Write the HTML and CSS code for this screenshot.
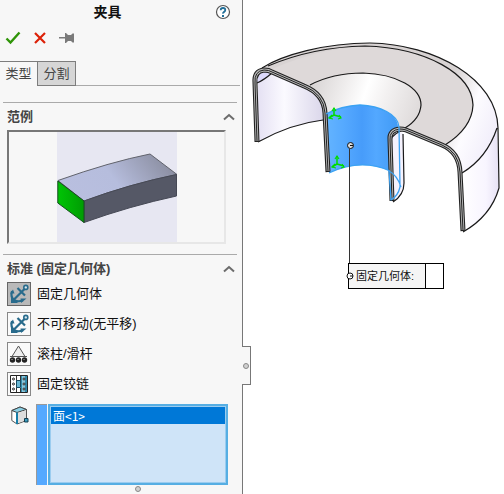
FILE: index.html
```html
<!DOCTYPE html>
<html lang="zh-CN">
<head>
<meta charset="utf-8">
<meta name="viewport" content="width=device-width, initial-scale=1">
<title>夹具</title>
<link rel="stylesheet" href="styles.css">
</head>
<body>
<svg class="defs" aria-hidden="true">
  <defs>
    <symbol id="anchor" viewBox="0 0 22 22">
      <path d="M4 8C2.500 13 4 16 7 17.500Q10 19 15 17.500" fill="none" stroke="#286b8c" stroke-width="2.200"/>
      <path d="M2 10.500L5 6.500l1.500 4zM18.500 15.500L13 20l-.5-4.500zM3 13v7h7z" fill="#286b8c"/>
      <path d="M6 16.500L16.500 6M9.500 5l7.500 7.500" fill="none" stroke="#286b8c" stroke-width="2.200"/>
      <circle cx="17.800" cy="4.400" r="2" fill="#d8e6ed" stroke="#286b8c" stroke-width="1.600"/>
    </symbol>
    <symbol id="chevron" viewBox="0 0 12 8">
      <path d="M1 6.500L6 2l5 4.500" fill="none" stroke="#6c6c6c" stroke-width="2"/>
    </symbol>
  </defs>
</svg>
<div class="app">
  <aside class="panel">
    <header class="panel-header">
      <h1>夹具</h1>
      <button class="icon-button help" aria-label="帮助">
        <svg width="16" height="16" viewBox="0 0 16 16"><circle cx="8" cy="8" r="6.500" fill="#fff" stroke="#555" stroke-width="1.200"/><path d="M5.700 6.300q0-2.300 2.300-2.300t2.300 2q0 1.200-1.200 1.900T8 9.700" fill="none" stroke="#226f98" stroke-width="1.800"/><path d="M7 11h2v2H7z" fill="#226f98"/></svg>
      </button>
    </header>
    <div class="actions">
      <button class="icon-button" aria-label="确定"><svg width="16" height="14" viewBox="0 0 16 14"><path d="M1.500 7.500l4 4L14.500 1.500" fill="none" stroke="#2f9408" stroke-width="2.400"/></svg></button>
      <button class="icon-button" aria-label="取消"><svg width="16" height="14" viewBox="0 0 16 14"><path d="M3 2l10 10M13 2L3 12" stroke="#dc2108" stroke-width="2.200"/></svg></button>
      <button class="icon-button" aria-label="保持可见"><svg width="16" height="14" viewBox="0 0 16 14"><path d="M0 6h6V2h1l2 2h3l1.500-1.500H15v9h-1.500L12 10H9l-2 2H6V7.500H0z" fill="#7a7a7a"/></svg></button>
    </div>
    <div class="tabs" role="tablist">
      <button class="tab active" role="tab" aria-selected="true">类型</button>
      <button class="tab" role="tab" aria-selected="false">分割</button>
    </div>
    <section class="group">
      <button class="group-title"><span>范例</span><svg width="12" height="8"><use href="#chevron"/></svg></button>
      <div class="preview">
        <svg width="120" height="110" viewBox="57 132 120 110" role="img" aria-label="固定几何体范例">
          <defs>
            <linearGradient id="blockTop" x1="0" y1=".6" x2="1" y2=".3"><stop offset="0" stop-color="#b9bfdf"/><stop offset=".45" stop-color="#b6bddd"/><stop offset="1" stop-color="#888b9d"/></linearGradient>
            <linearGradient id="blockEnd"><stop offset="0" stop-color="#00c405"/><stop offset="1" stop-color="#009c03"/></linearGradient>
          </defs>
          <path d="M57 132h120v110H57z" fill="#e7e7f2"/>
          <path d="M58 180.500Q110 162 150 154L177 174.500Q130 184 84 201z" fill="url(#blockTop)" stroke="#61636c"/>
          <path d="M84 201Q130 184 176.500 174.500V196Q130 206 84 222.500z" fill="#555866" stroke="#464955"/>
          <path d="M57.800 181L84 201v21.500L57.800 203z" fill="url(#blockEnd)" stroke="#164f1f"/>
        </svg>
      </div>
    </section>
    <section class="group">
      <button class="group-title"><span>标准 (固定几何体)</span><svg width="12" height="8"><use href="#chevron"/></svg></button>
      <div class="types">
        <button class="type" aria-pressed="true"><span class="type-icon"><svg width="22" height="22"><use href="#anchor"/></svg></span>固定几何体</button>
        <button class="type" aria-pressed="false"><span class="type-icon"><svg width="22" height="22"><use href="#anchor"/></svg></span>不可移动(无平移)</button>
        <button class="type" aria-pressed="false"><span class="type-icon"><svg width="22" height="22" viewBox="0 0 22 22"><path d="M10.500 3L4 13.500h13z" fill="#eee" stroke="#555"/><path d="M2 13.500h17" stroke="#555"/><g fill="#222"><circle cx="4.500" cy="17" r="2.700"/><circle cx="10.500" cy="17" r="2.700"/><circle cx="16.500" cy="17" r="2.700"/></g><path d="M3.500 16.500h1M9.500 16.500h1M15.500 16.500h1" stroke="#bbb"/></svg></span>滚柱/滑杆</button>
        <button class="type" aria-pressed="false"><span class="type-icon"><svg width="22" height="22" viewBox="0 0 22 22"><path d="M2.500 2.500h17v17h-17z" fill="#fff" stroke="#222"/><path d="M13 3h6v16h-6z" fill="#3289aa"/><path d="M14 3h3v16h-3z" fill="#8ac7dc"/><path d="M8.500 3v16M12.500 3v5M12.500 15v4" stroke="#333"/><path d="M8.500 7.500h4v7h-4z" fill="#68b6d2" stroke="#174b61"/><g fill="#fff" stroke="#222"><circle cx="5.500" cy="6" r="1"/><circle cx="5.500" cy="11" r="1"/><circle cx="5.500" cy="16" r="1"/><circle cx="16" cy="6" r="1"/><circle cx="16" cy="11" r="1"/><circle cx="16" cy="16" r="1"/></g></svg></span>固定铰链</button>
      </div>
      <div class="selection">
        <label for="faces" aria-label="选择的面"><svg width="18" height="20" viewBox="0 0 18 20"><path d="M.8 4.500v10l5.200 3.500 9.500-3.500v-11L9 1z" fill="#fff" stroke="#555"/><path d="M.8 4.500L9 1l6.500 2.500L6 6.500z" fill="#8ad0e5" stroke="#444"/><path d="M7 7l8-2.800v10L7 17z" fill="#ddd"/><path d="M6 6.500V18" stroke="#167da7" stroke-width="2"/><path d="M13.500 12.500h3.500v3.500h-3.500z" fill="#3c9dc0" stroke="#123e50"/></svg></label>
        <span class="swatch"></span>
        <select id="faces" class="faces" size="4"><option selected>面&lt;1&gt;</option></select>
      </div>
    </section>
    <span class="grip"></span>
    <button class="splitter" aria-label="折叠面板"><span class="dot"></span></button>
  </aside>
  <main class="canvas">
    <svg class="model" width="261" height="300" viewBox="243 0 261 300" role="img" aria-label="环形零件剖面">
      <defs>
        <linearGradient id="leftWall"><stop offset="0" stop-color="#e5e1f3"/><stop offset=".4" stop-color="#fbfaff"/><stop offset="1" stop-color="#dad6ea"/></linearGradient>
        <linearGradient id="roll" x1="0" y1=".2" x2="1" y2=".4"><stop offset="0" stop-color="#d8d4d4"/><stop offset=".3" stop-color="#efeded"/><stop offset=".5" stop-color="#fff"/><stop offset=".7" stop-color="#f2f0f0"/><stop offset="1" stop-color="#e0dcdc"/></linearGradient>
        <linearGradient id="outer" gradientUnits="userSpaceOnUse" x1="435" y1="120" x2="500" y2="145"><stop offset="0" stop-color="#d8d3d3"/><stop offset=".45" stop-color="#fdfcff"/><stop offset="1" stop-color="#eeeaf9"/></linearGradient>
        <linearGradient id="skirt"><stop offset="0" stop-color="#fff"/><stop offset=".65" stop-color="#f8f5ff"/><stop offset="1" stop-color="#e6e1f4"/></linearGradient>
        <linearGradient id="bore"><stop offset="0" stop-color="#64b4ff"/><stop offset=".25" stop-color="#55a9ff"/><stop offset=".5" stop-color="#479cfa"/><stop offset=".7" stop-color="#53a8ff"/><stop offset="1" stop-color="#409af5"/></linearGradient>
      </defs>
      <path d="M258 82Q258 73 266 72L304 87Q320 95 324 113V120Q290 124 258 142z" fill="url(#leftWall)"/>
      <path d="M262 68C282 55 325 43 370 43C435 44 497 79 498 128Q491 155 462 173Q461 154 443 145L402 129Q388 129 389 137L326 114Q324 96 305 85L270 71z" fill="url(#outer)"/>
      <path d="M268 71C290 61 325 47 370 46C427 48 472 74 473 105Q472 128 445 145L402 129L305 85z" fill="#ded9d9"/>
      <path d="M310 85C325 77 345 73 363 73C397 74 421 88 421 105Q420 119 405 128L388 137L326 114Q324 98 310 87z" fill="url(#roll)"/>
      <path d="M257 83Q263 81 272 73Q268 71 261 73Q257 77 257 83z" fill="#dcd9fb"/>
      <path d="M462 173Q487 158 497 128L499 188Q491 216 463 232z" fill="url(#skirt)"/>
      <path d="M389 141Q394 130 403 133L404 183Q404 195 393 202L390 200z" fill="#f5f2fd"/>
      <path d="M326 114Q341 106 360 105C380 106 398 114 398 127Q389 129 388 137L390 171Q361 158 329 173z" fill="url(#bore)"/>
      <path d="M262 68C282 55 325 43 370 43C435 44 497 79 498 128L499 188Q491 216 463 232M268 66Q313 47 365 46C427 48 472 74 473 105Q472 128 445 145M257 83Q264 80 272 73M310 85C325 77 345 73 363 73C397 74 421 88 421 105Q420 119 405 128M258 142Q290 124 323 120M497 128Q487 158 462 173M403 134L404 183Q404 195 393 202M391 138Q396 133 402 130" fill="none" stroke="#191919" stroke-width="1.200"/>
      <g fill="none" stroke-linejoin="round">
        <path d="M257 142L255 83Q254 71 264 70Q269 70 272 72L304 86Q324 94 325 113L328 172" stroke="#222" stroke-width="5"/>
        <path d="M257 141L255 83Q254 71 264 70Q269 70 272 72L304 86Q324 94 325 113L328 171" stroke="#bbb" stroke-width="2.800"/>
        <path d="M257 141L255 83Q254 71 264 70Q269 70 272 72L304 86Q324 94 325 113L328 171" stroke="#222"/>
        <path d="M392 201L390 140Q389 130 400 129Q403 129 406 130L442 145Q459 152 460 172L463 231" stroke="#222" stroke-width="5"/>
        <path d="M392 200L390 140Q389 130 400 129Q403 129 406 130L442 145Q459 152 460 172L463 230" stroke="#bbb" stroke-width="2.800"/>
        <path d="M392 200L390 140Q389 130 400 129Q403 129 406 130L442 145Q459 152 460 172L463 230" stroke="#222"/>
        <path d="M326 114Q341 106 360 105C380 106 398 114 399 127L400 187Q398 196 391 200L389 171Q397 175 401 187M329 173Q361 158 390 171" stroke="#3ba2f3" stroke-width="1.300"/>
      </g>
      <g fill="none" stroke="#00dc00" stroke-width="1.500">
        <path d="M334 108v7l-5 3M334 115l7 2M337 156v8l-5 3M337 164l7 2"/>
        <path d="M332 111l2-3 2 3M332 115l-3 3 4 1M339 115l2 3-3 1M335 159l2-3 2 3M335 164l-3 3 4 1M342 164l2 3-3 1" stroke-width="1.200"/>
      </g>
      <path d="M349.500 149v123" stroke="#333"/>
      <circle cx="350.500" cy="145.500" r="3" fill="#ddd" stroke="#111"/><path d="M350 145.500h3" stroke="#111"/>
    </svg>
    <div class="callout">
      <label for="callout-value">固定几何体:</label>
      <input id="callout-value" type="text">
      <svg class="callout-node" width="8" height="8" viewBox="0 0 8 8"><circle cx="4" cy="4" r="3" fill="#fff" stroke="#111"/><path d="M4 4h3" stroke="#111"/></svg>
    </div>
  </main>
</div>
</body>
</html>
```

FILE: styles.css
```css
* { box-sizing: border-box; }
body {
  margin: 0;
  background: #fff;
  color: #111;
  font: 13px/20px "Liberation Sans", "Noto Sans CJK SC", sans-serif;
}
button {
  padding: 0;
  border: 0;
  background: none;
  color: inherit;
  font: inherit;
}
svg { display: block; }
.defs { position: absolute; width: 0; height: 0; }
.app {
  display: grid;
  grid-template-columns: 243px 1fr;
  min-height: 100vh;
}
.panel {
  position: relative;
  display: flex;
  flex-direction: column;
  border-right: 1px solid #777;
  background: #f7f7f7;
}
.panel-header {
  display: flex;
  justify-content: space-between;
  align-items: center;
  height: 23px;
  padding: 0 11px 0 0;
}
h1 {
  flex: 1;
  margin: 0;
  font-size: 14px;
  line-height: 20px;
  text-align: center;
}
.actions {
  display: flex;
  gap: 11px;
  padding: 8px 5px;
}
.tabs {
  display: flex;
  height: 25px;
  margin: 8px 2px 0 0;
}
.tabs::after {
  flex: 1;
  border-bottom: 1px solid #aaa;
  content: "";
}
.tab {
  width: 39px;
  border: 1px solid #7d7d7d;
  background: #d6d6d6;
  color: #444;
}
.tab.active {
  width: 37px;
  border-width: 1px 0 0;
  background: transparent;
}
.group {
  margin: 0 5px 0 3px;
  padding: 0 4px;
  border-top: 1px solid #aaa;
}
.tabs + .group { margin-top: 16px; }
.group + .group { margin-top: 10px; }
.group-title {
  display: flex;
  justify-content: space-between;
  align-items: center;
  width: 100%;
  height: 27px;
  color: #444;
  font-weight: bold;
}
.group-title svg { margin-right: -2px; }
.preview {
  display: flex;
  justify-content: center;
  margin-right: 7px;
  border: 2px solid;
  border-color: #777 #e7e7e7 #e7e7e7 #777;
}
.types {
  display: grid;
  gap: 6px;
}
.type {
  display: flex;
  align-items: center;
  gap: 6px;
  text-align: left;
}
.type-icon {
  width: 24px;
  height: 24px;
  border: 1px solid #888;
  background: #fafafa;
}
.type[aria-pressed="true"] .type-icon {
  border-color: #666;
  background: #b9b9b9;
}
.selection {
  display: grid;
  grid-template-columns: 29px 12px 1fr;
  height: 81px;
  margin: 8px 5px 0 0;
}
.selection label { padding: 2px 0 0 4px; }
.swatch {
  width: 11px;
  border: 1px solid #999;
  border-width: 1px 0 0 1px;
  background: #55a9ff;
}
.faces {
  width: 100%;
  height: 81px;
  padding: 0;
  border: 2px solid #56aee3;
  border-radius: 0;
  outline: 1px solid #9bccef;
  outline-offset: -3px;
  background: #cfe4f8;
  color: #fff;
  font: 12px/16px "Noto Sans CJK SC", sans-serif;
  overflow: hidden;
}
.faces option {
  min-height: 16px;
  margin: 1px;
  padding: 0 2px;
  color: #fff;
}
.faces option:checked {
  background: #0078d7 linear-gradient(#0078d7, #0078d7);
  color: #fff;
  -webkit-text-fill-color: #fff;
}
.grip, .dot {
  width: 6px;
  height: 6px;
  border: 1px solid #888;
  border-radius: 50%;
  background: #d0d0d0;
}
.grip {
  align-self: center;
  margin: 1px 0 0 34px;
}
.splitter {
  position: absolute;
  top: 346px;
  right: -9px;
  display: grid;
  place-items: center;
  width: 9px;
  height: 39px;
  border: 1px solid #777;
  border-left: 0;
  background: #f7f7f7;
}
.canvas { position: relative; }
.callout {
  position: absolute;
  top: 263px;
  left: 105px;
  display: flex;
  height: 26px;
  border: 1px solid #000;
  background: #f5f5f5;
  font-size: 11px;
  line-height: 24px;
}
.callout label { width: 76px; padding-left: 7px; }
.callout input {
  width: 18px;
  padding: 0;
  border: 0;
  border-left: 1px solid #000;
  background: #fff;
}
.callout-node {
  position: absolute;
  top: 8px;
  left: -3px;
}
```
